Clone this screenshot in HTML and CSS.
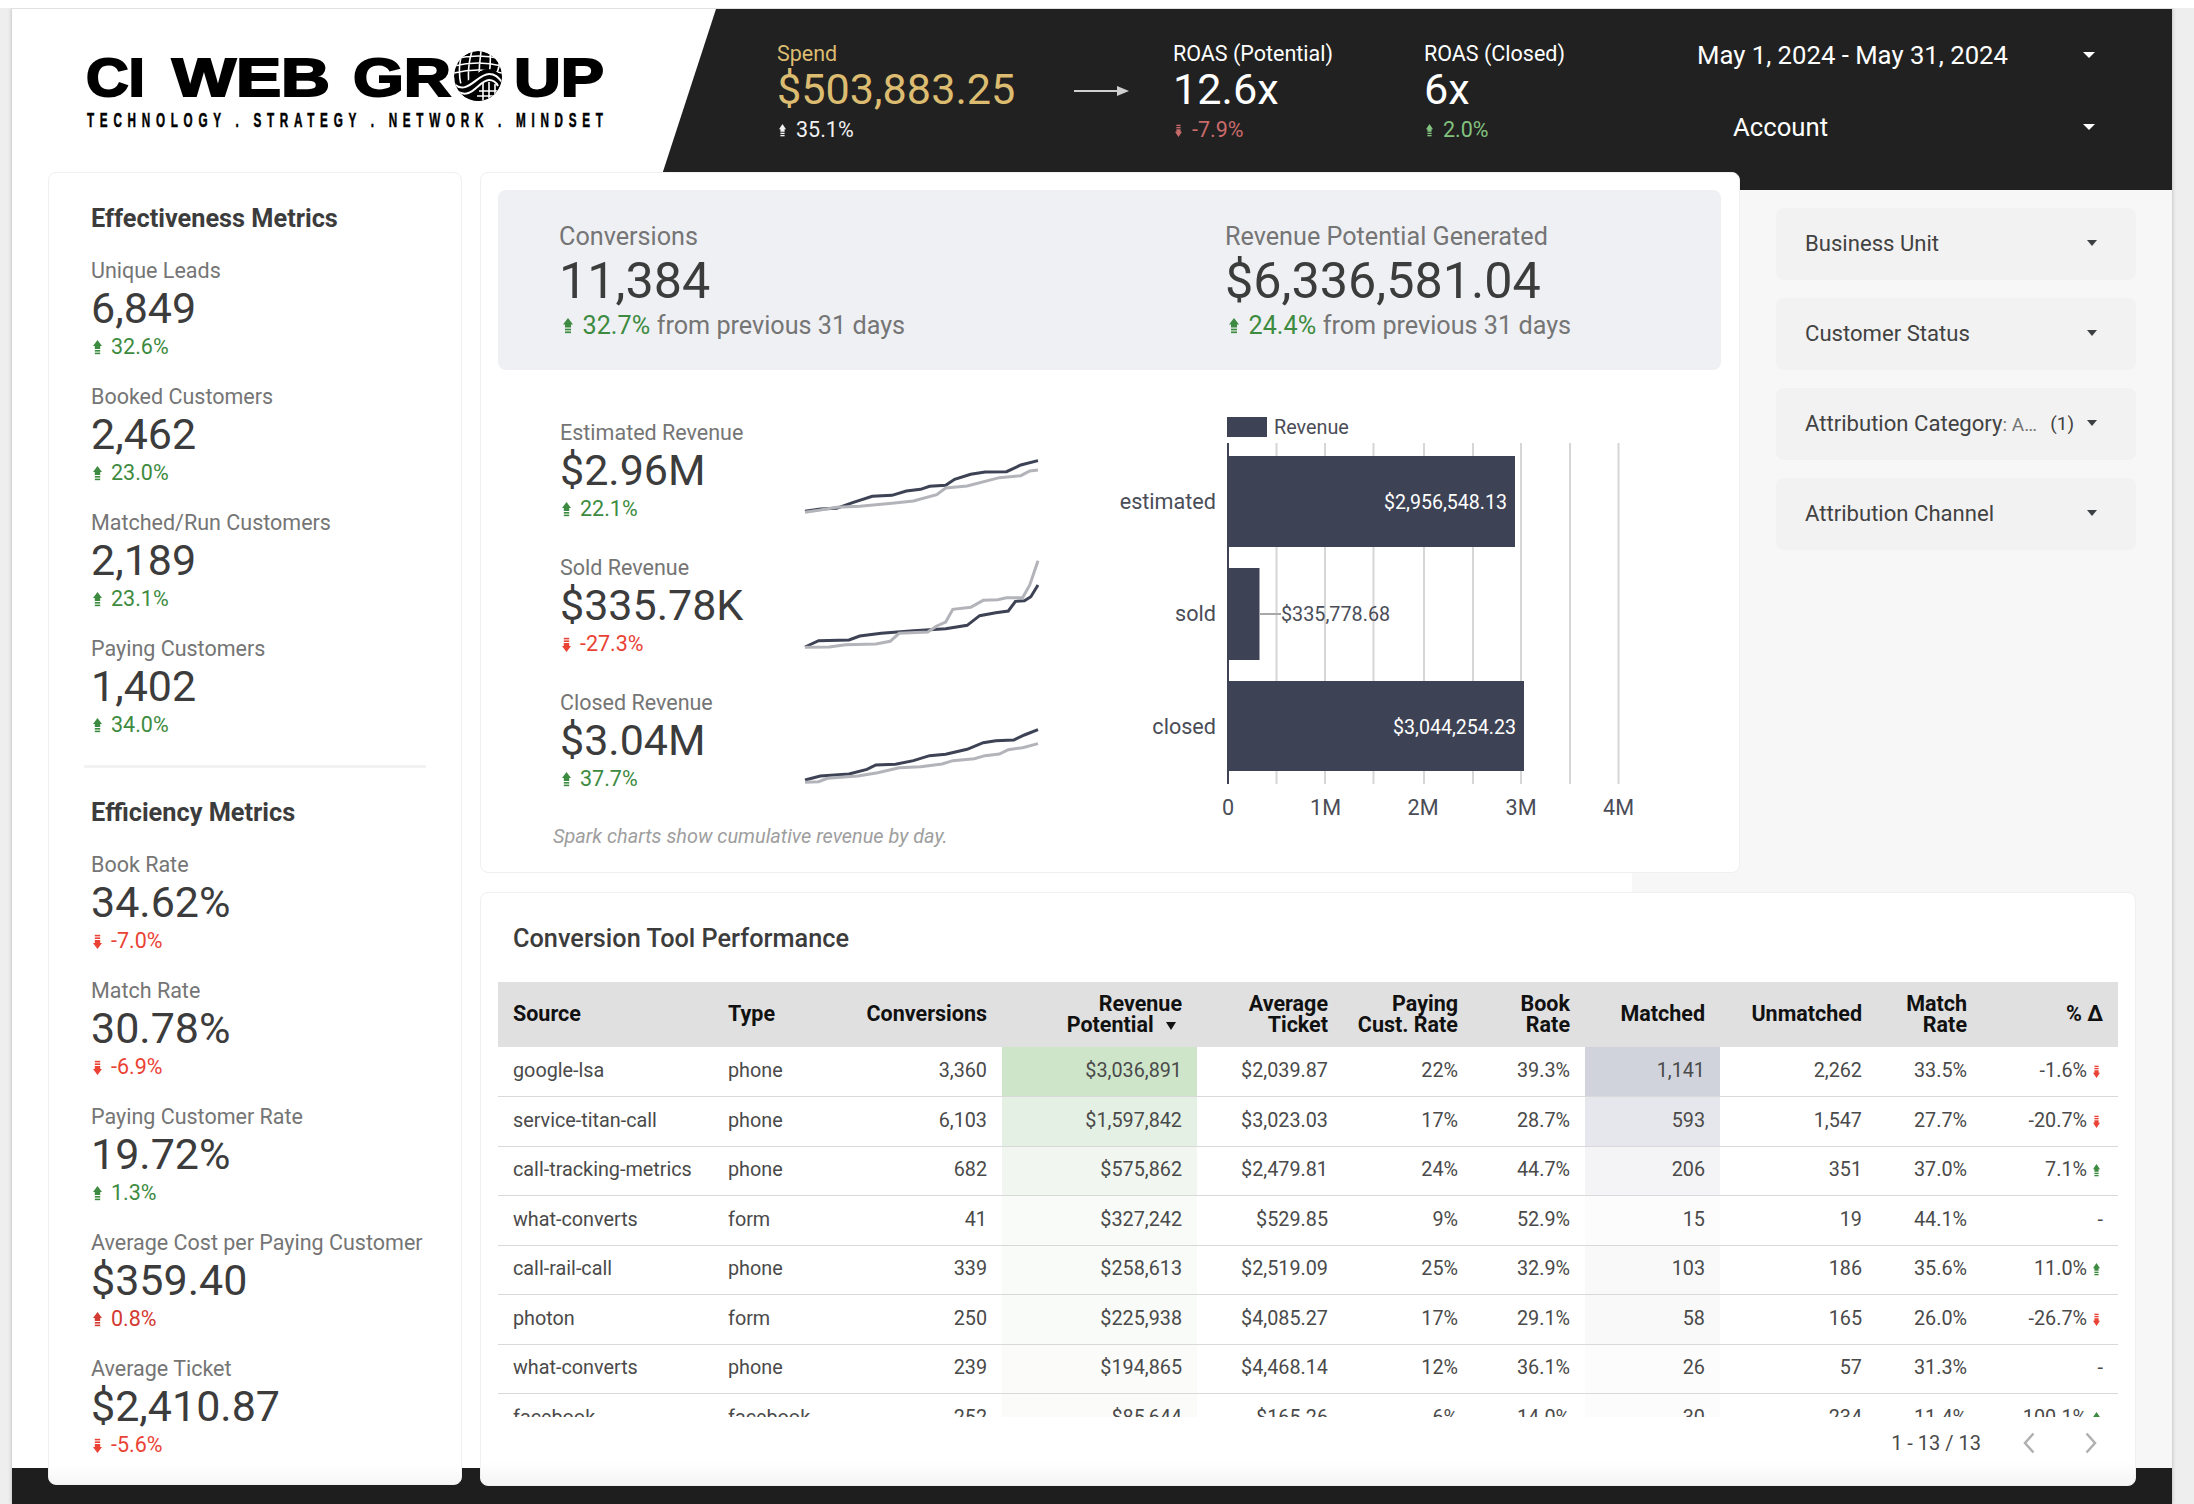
FILE: index.html
```html
<!DOCTYPE html>
<html lang="en">
<head>
  <meta charset="UTF-8">
  <title>Conversion Dashboard</title>
  <link rel="stylesheet" href="styles.css">
</head>
<body>
  <svg class="defs" width="0" height="0">
    <symbol id="arrow-up" viewBox="0 0 10 15" preserveAspectRatio="none">
      <path d="M5 0 10 6H8V9H2V6H0Z"/>
      <rect x="2" y="10" width="6" height="1.6"/>
      <rect x="2" y="12.6" width="6" height="1.6"/>
    </symbol>
    <symbol id="arrow-down" viewBox="0 0 10 15" preserveAspectRatio="none">
      <path d="M5 15 10 9H8V6H2V9H0Z"/>
      <rect x="2" y="3.4" width="6" height="1.6"/>
      <rect x="2" y="0.8" width="6" height="1.6"/>
    </symbol>
  </svg>

  <div class="canvas">
    <div class="topbar">
      <div class="logo">
        <svg width="520" height="76" viewBox="0 0 520 76">
          <defs>
            <clipPath id="globe-clip"><ellipse cx="391" cy="21" rx="24" ry="25"/></clipPath>
          </defs>
          <text class="logo-word" x="-1" y="41" textLength="59" lengthAdjust="spacingAndGlyphs">CI</text>
          <text class="logo-word" x="85" y="41" textLength="158" lengthAdjust="spacingAndGlyphs">WEB</text>
          <text class="logo-word" x="266" y="41" textLength="98" lengthAdjust="spacingAndGlyphs">GR</text>
          <text class="logo-word" x="427" y="41" textLength="90" lengthAdjust="spacingAndGlyphs">UP</text>
          <g clip-path="url(#globe-clip)">
            <ellipse cx="391" cy="21" rx="24" ry="25" fill="#000"/>
            <path class="globe-line" d="M367 4Q391 -2 415 4M367 11Q391 5 415 11M367 18Q391 12 415 18M376 -4Q370 12 374 30M385 -4Q380 12 382 30M394 -4Q392 10 392 24M403 -4Q404 8 402 20M412 -2Q414 8 410 18"/>
            <path d="M365 24C378 38 388 14 401 14C408 14 412 18 417 24V48H365Z" fill="#000"/>
            <path class="globe-band" d="M366 28C380 42 390 19 402 19C408 19 411 22 415 27"/>
            <path class="globe-band" d="M370 36C384 46 392 25 402 25C406 25 409 27 411 31"/>
            <path class="globe-line" d="M392 36H412M390 41H410M396 27V46M402 27V46M408 29V44"/>
          </g>
          <text class="logo-tag" transform="scale(0.6 1)" x="0" y="72" textLength="860">TECHNOLOGY . STRATEGY . NETWORK . MINDSET</text>
        </svg>
      </div>
      <div class="header-dark">
        <div class="head-kpi spend">
          <div class="kpi-label">Spend</div>
          <div class="kpi-value">$503,883.25</div>
          <div class="head-delta white"><svg class="arrow-head"><use href="#arrow-up"/></svg>35.1%</div>
        </div>
        <svg class="flow-arrow" width="55" height="12" viewBox="0 0 55 12">
          <path d="M0 6H44" stroke="#d0d0d0" stroke-width="2"/>
          <path d="M43 1 55 6 43 11Z" fill="#d0d0d0"/>
        </svg>
        <div class="head-kpi roas-pot">
          <div class="kpi-label">ROAS (Potential)</div>
          <div class="kpi-value">12.6x</div>
          <div class="head-delta soft-red"><svg class="arrow-head"><use href="#arrow-down"/></svg>-7.9%</div>
        </div>
        <div class="head-kpi roas-closed">
          <div class="kpi-label">ROAS (Closed)</div>
          <div class="kpi-value">6x</div>
          <div class="head-delta soft-green"><svg class="arrow-head"><use href="#arrow-up"/></svg>2.0%</div>
        </div>
        <div class="selectors">
          <div class="selector"><span>May 1, 2024 - May 31, 2024</span><i class="caret caret-white"></i></div>
          <div class="selector"><span class="account">Account</span><i class="caret caret-white"></i></div>
        </div>
      </div>
    </div>

    <div class="main">
      <div class="card rail">
        <h2 class="rail-title">Effectiveness Metrics</h2>
        <div class="metric">
          <div class="metric-label">Unique Leads</div>
          <div class="metric-value">6,849</div>
          <div class="metric-delta green"><svg class="arrow-side"><use href="#arrow-up"/></svg>32.6%</div>
        </div>
        <div class="metric">
          <div class="metric-label">Booked Customers</div>
          <div class="metric-value">2,462</div>
          <div class="metric-delta green"><svg class="arrow-side"><use href="#arrow-up"/></svg>23.0%</div>
        </div>
        <div class="metric">
          <div class="metric-label">Matched/Run Customers</div>
          <div class="metric-value">2,189</div>
          <div class="metric-delta green"><svg class="arrow-side"><use href="#arrow-up"/></svg>23.1%</div>
        </div>
        <div class="metric">
          <div class="metric-label">Paying Customers</div>
          <div class="metric-value">1,402</div>
          <div class="metric-delta green"><svg class="arrow-side"><use href="#arrow-up"/></svg>34.0%</div>
        </div>
        <div class="rail-divider"></div>
        <h2 class="rail-title">Efficiency Metrics</h2>
        <div class="metric">
          <div class="metric-label">Book Rate</div>
          <div class="metric-value">34.62%</div>
          <div class="metric-delta red"><svg class="arrow-side"><use href="#arrow-down"/></svg>-7.0%</div>
        </div>
        <div class="metric">
          <div class="metric-label">Match Rate</div>
          <div class="metric-value">30.78%</div>
          <div class="metric-delta red"><svg class="arrow-side"><use href="#arrow-down"/></svg>-6.9%</div>
        </div>
        <div class="metric">
          <div class="metric-label">Paying Customer Rate</div>
          <div class="metric-value">19.72%</div>
          <div class="metric-delta green"><svg class="arrow-side"><use href="#arrow-up"/></svg>1.3%</div>
        </div>
        <div class="metric">
          <div class="metric-label">Average Cost per Paying Customer</div>
          <div class="metric-value">$359.40</div>
          <div class="metric-delta dark-red"><svg class="arrow-side"><use href="#arrow-up"/></svg>0.8%</div>
        </div>
        <div class="metric">
          <div class="metric-label">Average Ticket</div>
          <div class="metric-value">$2,410.87</div>
          <div class="metric-delta red"><svg class="arrow-side"><use href="#arrow-down"/></svg>-5.6%</div>
        </div>
      </div>

      <div class="right-area">
        <div class="upper-row">
          <div class="card revenue-card">
            <div class="totals">
              <div class="total">
                <div class="total-label">Conversions</div>
                <div class="total-value">11,384</div>
                <div class="total-delta"><svg class="arrow-total"><use href="#arrow-up"/></svg><span class="green">32.7%</span> from previous 31 days</div>
              </div>
              <div class="total">
                <div class="total-label">Revenue Potential Generated</div>
                <div class="total-value">$6,336,581.04</div>
                <div class="total-delta"><svg class="arrow-total"><use href="#arrow-up"/></svg><span class="green">24.4%</span> from previous 31 days</div>
              </div>
            </div>
            <div class="revenue-body">
              <div class="spark-col">
                <div class="spark-row">
                  <div class="spark-text">
                    <div class="metric-label">Estimated Revenue</div>
                    <div class="spark-value">$2.96M</div>
                    <div class="metric-delta green"><svg class="arrow-side"><use href="#arrow-up"/></svg>22.1%</div>
                  </div>
                  <svg class="spark" viewBox="797 93 651 306" preserveAspectRatio="none">
                    <polyline class="spark-dark" points="797,364 840,357 885,355 930,338 985,319 1040,316 1080,303 1120,298 1145,289 1190,286 1215,268 1260,253 1300,246 1360,245 1400,225 1448,212"/>
                    <polyline class="spark-grey" points="797,367 840,360 885,352 950,349 1040,340 1100,333 1165,314 1190,294 1250,288 1340,263 1400,257 1425,243 1448,240"/>
                  </svg>
                </div>
                <div class="spark-row">
                  <div class="spark-text">
                    <div class="metric-label">Sold Revenue</div>
                    <div class="spark-value">$335.78K</div>
                    <div class="metric-delta red"><svg class="arrow-side"><use href="#arrow-down"/></svg>-27.3%</div>
                  </div>
                  <svg class="spark" viewBox="797 498 651 306" preserveAspectRatio="none">
                    <polyline class="spark-dark" points="797,771 835,752 920,750 950,738 1010,730 1100,722 1190,716 1250,706 1285,677 1330,668 1365,663 1385,634 1410,632 1428,620 1448,585"/>
                    <polyline class="spark-grey" points="797,772 865,771 910,764 995,762 1035,754 1060,730 1140,726 1165,708 1190,696 1210,658 1260,652 1295,631 1335,629 1360,623 1405,623 1425,585 1448,512"/>
                  </svg>
                </div>
                <div class="spark-row">
                  <div class="spark-text">
                    <div class="metric-label">Closed Revenue</div>
                    <div class="spark-value">$3.04M</div>
                    <div class="metric-delta green"><svg class="arrow-side"><use href="#arrow-up"/></svg>37.7%</div>
                  </div>
                  <svg class="spark" viewBox="797 903 651 306" preserveAspectRatio="none">
                    <polyline class="spark-dark" points="797,1170 840,1158 920,1152 970,1138 995,1125 1050,1123 1100,1112 1145,1097 1190,1093 1250,1078 1295,1058 1330,1052 1380,1050 1410,1035 1448,1019"/>
                    <polyline class="spark-grey" points="797,1177 835,1175 860,1165 945,1158 1000,1148 1060,1133 1120,1130 1180,1122 1210,1112 1270,1106 1300,1097 1340,1092 1365,1079 1405,1073 1448,1061"/>
                  </svg>
                </div>
                <div class="spark-note">Spark charts show cumulative revenue by day.</div>
              </div>
              <svg class="bars" width="620" height="430" viewBox="1100 400 620 430">
                <rect class="bar" x="1227" y="417" width="40" height="20"/>
                <text class="chart-text" x="1274" y="434">Revenue</text>
                <path class="grid" d="M1276.500 443V784M1325 443V784M1373.500 443V784M1424 443V784M1473 443V784M1521 443V784M1570 443V784M1618.500 443V784"/>
                <rect class="bar" x="1228" y="456" width="287" height="91"/>
                <rect class="bar" x="1228" y="568" width="31.500" height="92"/>
                <rect class="bar" x="1228" y="681" width="296" height="90"/>
                <path class="axis" d="M1228 443V784"/>
                <path class="leader" d="M1260 614H1281"/>
                <text class="chart-text cat" x="1216" y="509">estimated</text>
                <text class="chart-text cat" x="1216" y="621">sold</text>
                <text class="chart-text cat" x="1216" y="734">closed</text>
                <text class="chart-text bar-in" x="1507" y="509">$2,956,548.13</text>
                <text class="chart-text" x="1281" y="621">$335,778.68</text>
                <text class="chart-text bar-in" x="1516" y="734">$3,044,254.23</text>
                <text class="chart-text tick" x="1228" y="815">0</text>
                <text class="chart-text tick" x="1325.500" y="815">1M</text>
                <text class="chart-text tick" x="1423" y="815">2M</text>
                <text class="chart-text tick" x="1521" y="815">3M</text>
                <text class="chart-text tick" x="1618.500" y="815">4M</text>
              </svg>
            </div>
          </div>
          <div class="filters">
            <div class="filter"><span>Business Unit</span><i class="caret"></i></div>
            <div class="filter"><span>Customer Status</span><i class="caret"></i></div>
            <div class="filter"><span>Attribution Category<em>: A…</em></span><span class="filter-count">(1)</span><i class="caret"></i></div>
            <div class="filter"><span>Attribution Channel</span><i class="caret"></i></div>
          </div>
        </div>

        <div class="card table-card">
          <h2 class="table-title">Conversion Tool Performance</h2>
          <div class="table-clip">
            <table class="perf">
              <colgroup>
                <col class="c-source"><col class="c-type"><col class="c-conv"><col class="c-rev"><col class="c-ticket"><col class="c-pay"><col class="c-book"><col class="c-match"><col class="c-unm"><col class="c-rate"><col class="c-pct">
              </colgroup>
              <thead>
                <tr>
                  <th class="left">Source</th>
                  <th class="left">Type</th>
                  <th>Conversions</th>
                  <th>Revenue<br>Potential <i class="sort"></i></th>
                  <th>Average<br>Ticket</th>
                  <th>Paying<br>Cust. Rate</th>
                  <th>Book<br>Rate</th>
                  <th>Matched</th>
                  <th>Unmatched</th>
                  <th>Match<br>Rate</th>
                  <th>% &Delta;</th>
                </tr>
              </thead>
              <tbody>
                <tr><td class="left">google-lsa</td><td class="left">phone</td><td>3,360</td><td class="rev-1">$3,036,891</td><td>$2,039.87</td><td>22%</td><td>39.3%</td><td class="mat-1">1,141</td><td>2,262</td><td>33.5%</td><td>-1.6%<svg class="arrow-cell red"><use href="#arrow-down"/></svg></td></tr>
                <tr><td class="left">service-titan-call</td><td class="left">phone</td><td>6,103</td><td class="rev-2">$1,597,842</td><td>$3,023.03</td><td>17%</td><td>28.7%</td><td class="mat-2">593</td><td>1,547</td><td>27.7%</td><td>-20.7%<svg class="arrow-cell red"><use href="#arrow-down"/></svg></td></tr>
                <tr><td class="left">call-tracking-metrics</td><td class="left">phone</td><td>682</td><td class="rev-3">$575,862</td><td>$2,479.81</td><td>24%</td><td>44.7%</td><td class="mat-3">206</td><td>351</td><td>37.0%</td><td>7.1%<svg class="arrow-cell green"><use href="#arrow-up"/></svg></td></tr>
                <tr><td class="left">what-converts</td><td class="left">form</td><td>41</td><td class="rev-4">$327,242</td><td>$529.85</td><td>9%</td><td>52.9%</td><td class="mat-4">15</td><td>19</td><td>44.1%</td><td>-</td></tr>
                <tr><td class="left">call-rail-call</td><td class="left">phone</td><td>339</td><td class="rev-5">$258,613</td><td>$2,519.09</td><td>25%</td><td>32.9%</td><td class="mat-5">103</td><td>186</td><td>35.6%</td><td>11.0%<svg class="arrow-cell green"><use href="#arrow-up"/></svg></td></tr>
                <tr><td class="left">photon</td><td class="left">form</td><td>250</td><td class="rev-5">$225,938</td><td>$4,085.27</td><td>17%</td><td>29.1%</td><td class="mat-5">58</td><td>165</td><td>26.0%</td><td>-26.7%<svg class="arrow-cell red"><use href="#arrow-down"/></svg></td></tr>
                <tr><td class="left">what-converts</td><td class="left">phone</td><td>239</td><td class="rev-6">$194,865</td><td>$4,468.14</td><td>12%</td><td>36.1%</td><td class="mat-4">26</td><td>57</td><td>31.3%</td><td>-</td></tr>
                <tr><td class="left">facebook</td><td class="left">facebook</td><td>252</td><td class="rev-6">$85,644</td><td>$165.26</td><td>6%</td><td>14.0%</td><td class="mat-4">30</td><td>234</td><td>11.4%</td><td>100.1%<svg class="arrow-cell green"><use href="#arrow-up"/></svg></td></tr>
              </tbody>
            </table>
          </div>
          <div class="pager">
            <span>1 - 13 / 13</span>
            <svg class="chev" width="12" height="22" viewBox="0 0 12 22"><path d="M10.500 1.500 2 11l8.500 9.500"/></svg>
            <svg class="chev" width="12" height="22" viewBox="0 0 12 22"><path d="M1.500 1.500 10 11l-8.500 9.500"/></svg>
          </div>
        </div>
      </div>
    </div>

    <div class="footer"></div>
  </div>
</body>
</html>
```

FILE: styles.css
```css
body {
  margin: 0;
  height: 1504px;
  overflow: hidden;
  background-color: #eeeeee;
  font-family: Roboto, "Liberation Sans", sans-serif;
  color: #3c4043;
  box-sizing: border-box;
  border-top: 8px solid #ffffff;
}

.defs {
  position: absolute;
}

.canvas {
  width: 2160px;
  height: 1496px;
  margin-left: 12px;
  border-top: 1px solid #e0e0e0;
  box-sizing: border-box;
  background-color: #f7f7f7;
  box-shadow: 0 0 4px rgba(0, 0, 0, 0.25);
  display: flex;
  flex-direction: column;
}

/* header */
.topbar {
  display: flex;
  height: 181px;
  flex: none;
  background-color: #ffffff;
}

.logo {
  width: 570px;
  flex: none;
  padding: 46px 0 0 75px;
}

.logo svg {
  display: block;
  overflow: visible;
}

.logo-word {
  font-family: "Liberation Sans", sans-serif;
  font-weight: 700;
  font-size: 54px;
  fill: #000000;
  stroke: #000000;
  stroke-width: 2px;
}

.logo-tag {
  font-family: "Liberation Sans", sans-serif;
  font-weight: 700;
  font-size: 19.500px;
  fill: #000000;
  stroke: #000000;
  stroke-width: 0.5px;
}

.globe-line {
  fill: none;
  stroke: #ffffff;
  stroke-width: 1.600px;
}

.globe-band {
  fill: none;
  stroke: #ffffff;
  stroke-width: 2px;
}

.header-dark {
  flex: 1;
  display: flex;
  align-items: flex-start;
  padding: 33px 0 0 120px;
  background-color: #212121;
  clip-path: polygon(59px 0, 100% 0, 100% 100%, 0 100%);
  color: #ffffff;
}

.head-kpi .kpi-label {
  font-size: 21.500px;
  line-height: 24px;
}

.head-kpi .kpi-value {
  font-size: 43.200px;
  line-height: 48px;
}

.spend {
  width: 297px;
  flex: none;
  color: #dcbc70;
}

.flow-arrow {
  flex: none;
  margin: 43px 44px 0 0;
}

.roas-pot {
  width: 251px;
  flex: none;
}

.roas-closed {
  width: 273px;
  flex: none;
}

.head-delta {
  margin-top: 1px;
  font-size: 21.500px;
  line-height: 30px;
  display: flex;
  align-items: center;
}

.white {
  color: #f1f1f1;
}

.soft-red {
  color: #c96a6a;
}

.soft-green {
  color: #83c17f;
}

.arrow-head {
  width: 7px;
  height: 13px;
  fill: currentColor;
  margin: 0 10px 0 2px;
}

.selectors {
  width: 398px;
  flex: none;
  margin-top: -2px;
  display: flex;
  flex-direction: column;
  gap: 42px;
}

.selector {
  display: flex;
  justify-content: space-between;
  align-items: center;
  font-size: 25.700px;
  line-height: 30px;
}

.account {
  padding-left: 36px;
}

.caret {
  display: block;
  flex: none;
  width: 0;
  height: 0;
  border-left: 5px solid transparent;
  border-right: 5px solid transparent;
  border-top: 6px solid #3c4043;
}

.caret-white {
  border-left-width: 6px;
  border-right-width: 6px;
  border-top-color: #ffffff;
}

/* main area */
.main {
  display: flex;
  height: 1278px;
  flex: none;
  padding-left: 36px;
  box-sizing: border-box;
  background: linear-gradient(90deg, #ffffff 1620px, #f7f7f7 1620px);
}

.card {
  position: relative;
  z-index: 1;
  box-sizing: border-box;
  background-color: #ffffff;
  border: 1px solid #f0f0f0;
  border-radius: 8px;
}

.rail {
  width: 414px;
  height: 1313px;
  flex: none;
  margin-top: -18px;
  padding: 31px 0 0 42px;
  background: linear-gradient(#ffffff 98.500%, #f6f6f6);
}

.rail-title {
  margin: 0 0 25px;
  font-size: 25.300px;
  line-height: 30px;
  font-weight: 700;
  color: #3c3c3c;
}

.rail-divider {
  width: 342px;
  height: 3px;
  margin: 28px 0 30px -7px;
  background-color: #f2f2f2;
}

.metric {
  margin-bottom: 26px;
}

.metric-label {
  font-size: 21.500px;
  line-height: 24px;
  color: #757575;
}

.metric-value {
  font-size: 43px;
  line-height: 50px;
  color: #3c3c3c;
}

.metric-delta {
  display: flex;
  align-items: center;
  font-size: 21.500px;
  line-height: 26px;
  position: relative;
  top: 1px;
}

.arrow-side {
  width: 9px;
  height: 15px;
  fill: currentColor;
  margin: 0 9px 0 2px;
}

.green {
  color: #3d8b40;
}

.red {
  color: #ea4335;
}

.dark-red {
  color: #d33a32;
}

.right-area {
  width: 1656px;
  flex: none;
  margin-left: 18px;
}

.upper-row {
  display: flex;
  align-items: flex-start;
}

.revenue-card {
  width: 1260px;
  height: 701px;
  flex: none;
  margin-top: -18px;
  padding: 17px 18px 0 17px;
}

.totals {
  display: flex;
  height: 180px;
  padding: 35px 0 0 61px;
  box-sizing: border-box;
  border-radius: 8px;
  background-color: #eff0f4;
}

.total {
  width: 666px;
  flex: none;
}

.total-label {
  font-size: 25.200px;
  line-height: 24px;
  color: #757575;
}

.total-value {
  font-size: 50.300px;
  line-height: 64px;
  color: #3c3c3c;
}

.total-delta {
  display: flex;
  align-items: center;
  gap: 0.26em;
  margin-top: -1px;
  font-size: 25.200px;
  line-height: 28px;
  color: #757575;
}

.arrow-total {
  width: 10px;
  height: 16px;
  fill: #3d8b40;
  margin: 0 3px 0 4px;
}

.revenue-body {
  display: flex;
  align-items: flex-start;
}

.spark-col {
  width: 585px;
  flex: none;
  padding: 51px 0 0 62px;
  box-sizing: border-box;
}

.spark-row {
  display: flex;
  height: 102px;
  margin-bottom: 33px;
}

.spark-text {
  width: 245px;
  flex: none;
}

.spark-value {
  font-size: 43px;
  line-height: 50px;
  color: #3c3c3c;
}

.spark-text .metric-delta {
  top: 0;
  line-height: 28px;
}

.spark {
  width: 233px;
  height: 102px;
  flex: none;
  overflow: visible;
}

.spark polyline {
  fill: none;
  stroke-width: 3px;
  vector-effect: non-scaling-stroke;
}

.spark-dark {
  stroke: #3d4254;
}

.spark-grey {
  stroke: #b3b4ba;
}

.spark-note {
  margin: -1px 0 0 -7px;
  width: 500px;
  font-size: 19.900px;
  line-height: 24px;
  font-style: italic;
  color: #9e9e9e;
}

.bars {
  flex: none;
  margin: 30px 0 0 17px;
}

.chart-text {
  font-size: 19.800px;
  fill: #4a4d57;
}

.cat,
.bar-in {
  text-anchor: end;
}

.cat,
.tick {
  font-size: 21.600px;
}

.tick {
  text-anchor: middle;
}

.bar-in {
  font-size: 19.600px;
  fill: #ffffff;
}

.bar {
  fill: #3d4254;
}

.grid {
  stroke: #d6d6d6;
  stroke-width: 2px;
  fill: none;
}

.axis {
  stroke: #3d4254;
  stroke-width: 2px;
  fill: none;
}

.leader {
  stroke: #a8a8a8;
  stroke-width: 2px;
  fill: none;
}

/* filters */
.filters {
  width: 360px;
  flex: none;
  margin: 18px 0 0 36px;
  display: flex;
  flex-direction: column;
  gap: 18px;
}

.filter {
  display: flex;
  align-items: center;
  height: 72px;
  padding: 0 39px 2px 29px;
  box-sizing: border-box;
  border-radius: 8px;
  background-color: #f2f2f2;
  font-size: 22.100px;
  color: #424242;
}

.filter span:first-child {
  flex: 1;
}

.filter em {
  font-style: normal;
  font-size: 19px;
  color: #757575;
}

.filter-count {
  margin-right: 13px;
  font-size: 19px;
}

.table-card {
  width: 1656px;
  height: 594px;
  margin-top: 19px;
  padding: 31px 17px 0 17px;
  background: linear-gradient(#ffffff 96%, #f5f5f5);
}

.table-title {
  margin: 0 0 28px 15px;
  font-size: 25.300px;
  line-height: 30px;
  font-weight: 500;
  color: #3c3c3c;
}

.table-clip {
  height: 435px;
  overflow: hidden;
}

.perf {
  width: 1620px;
  table-layout: fixed;
  border-collapse: collapse;
  font-size: 19.800px;
  color: #4a4a4a;
}

.c-source { width: 215px; }
.c-type { width: 127px; }
.c-conv { width: 162px; }
.c-rev { width: 195px; }
.c-ticket { width: 146px; }
.c-pay { width: 130px; }
.c-book { width: 112px; }
.c-match { width: 135px; }
.c-unm { width: 157px; }
.c-rate { width: 105px; }
.c-pct { width: 136px; }

.perf th {
  height: 65px;
  padding: 0 15px 2px 0;
  box-sizing: border-box;
  background-color: #e0e0e0;
  color: #111111;
  font-weight: 700;
  font-size: 21.500px;
  line-height: 21px;
  text-align: right;
  white-space: nowrap;
}

.perf th.left {
  padding: 0 15px 2px;
}

.perf td {
  height: 49.500px;
  padding: 0 15px 2px;
  box-sizing: border-box;
  border-bottom: 1.500px solid #d9d9d9;
  text-align: right;
  white-space: nowrap;
}

.perf .left {
  text-align: left;
}

.sort {
  display: inline-block;
  width: 0;
  height: 0;
  margin: 0 6px 2px 7px;
  border-left: 5px solid transparent;
  border-right: 5px solid transparent;
  border-top: 8px solid #111111;
}

.arrow-cell {
  width: 7px;
  height: 13px;
  fill: currentColor;
  margin: 0 3px 0 6px;
  vertical-align: -1px;
}

.perf td.rev-1 { background-color: #cee5ca; }
.perf td.rev-2 { background-color: #e5f0e4; }
.perf td.rev-3 { background-color: #f1f7f0; }
.perf td.rev-4 { background-color: #f8fbf7; }
.perf td.rev-5 { background-color: #f9fbf8; }
.perf td.rev-6 { background-color: #fbfcfa; }
.perf td.mat-1 { background-color: #d0d3dc; }
.perf td.mat-2 { background-color: #e6e7ec; }
.perf td.mat-3 { background-color: #f4f4f7; }
.perf td.mat-4 { background-color: #fcfcfc; }
.perf td.mat-5 { background-color: #f9f9fa; }

.pager {
  display: flex;
  justify-content: flex-end;
  align-items: center;
  height: 24px;
  margin: 14px 21px 0 0;
  font-size: 20px;
  color: #4a4a4a;
}

.chev {
  margin-left: 50px;
}

.pager span + .chev {
  margin-left: 42px;
}

.chev path {
  fill: none;
  stroke: #b0b0b0;
  stroke-width: 2.500px;
}

.footer {
  flex: 1;
  background-color: #1e1e1e;
}
```
